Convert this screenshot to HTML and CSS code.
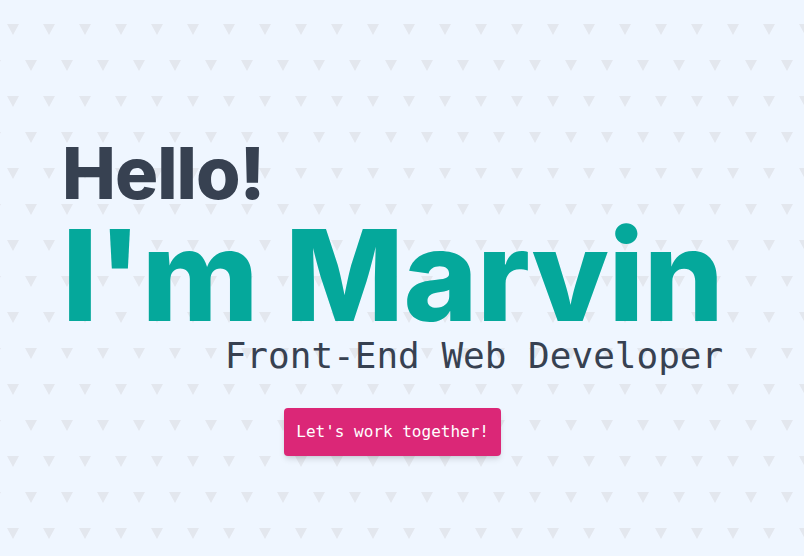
FILE: index.html
```html
<!DOCTYPE html>
<html lang="en">
<head>
<meta charset="utf-8">
<title>Marvin</title>
<link rel="stylesheet" href="styles.css">
</head>
<body>
<main class="hero">
  <div class="intro">
    <h2 class="hello">Hello!</h2>
    <h1 class="name">I'm Marvin</h1>
    <p class="role">Front-End Web Developer</p>
    <a class="cta" href="#">Let's work together!</a>
  </div>
</main>
</body>
</html>
```
FILE: styles.css
```css
html, body {
  margin: 0;
  padding: 0;
}
body {
  min-height: 100vh;
  background-color: #eff6ff;
  background-image: url("data:image/svg+xml,%3Csvg xmlns='http://www.w3.org/2000/svg' width='36' height='72'%3E%3Cg fill='%23e3e7ee'%3E%3Cpolygon points='7,24 19,24 13,35'/%3E%3Cpolygon points='25,60 37,60 31,71'/%3E%3Cpolygon points='-11,60 1,60 -5,71'/%3E%3C/g%3E%3C/svg%3E");
  background-size: 36px 72px;
  font-family: Inter, "Liberation Sans", sans-serif;
}
.hero {
  padding: 137px 0 0 62px;
}
.intro {
  display: inline-flex;
  flex-direction: column;
}
.hello {
  margin: 0;
  font-size: 72px;
  font-weight: 800;
  line-height: 1;
  letter-spacing: -1px;
  color: #374151;
}
.name {
  margin: 3px 0 0;
  font-size: 126px;
  font-weight: 800;
  line-height: 1;
  letter-spacing: -0.5px;
  color: #05a89b;
}
.role {
  align-self: flex-end;
  margin: -3px 0 0;
  font-family: "DejaVu Sans Mono", monospace;
  font-size: 36px;
  line-height: 42px;
  color: #374151;
}
.cta {
  align-self: center;
  margin-top: 31px;
  padding: 12px;
  font-family: "DejaVu Sans Mono", monospace;
  font-size: 16px;
  line-height: 24px;
  color: #ffffff;
  text-decoration: none;
  background: #db2777;
  border-radius: 4px;
  box-shadow: 0 4px 6px -1px rgba(0,0,0,0.12), 0 2px 4px -2px rgba(0,0,0,0.1);
}
```
